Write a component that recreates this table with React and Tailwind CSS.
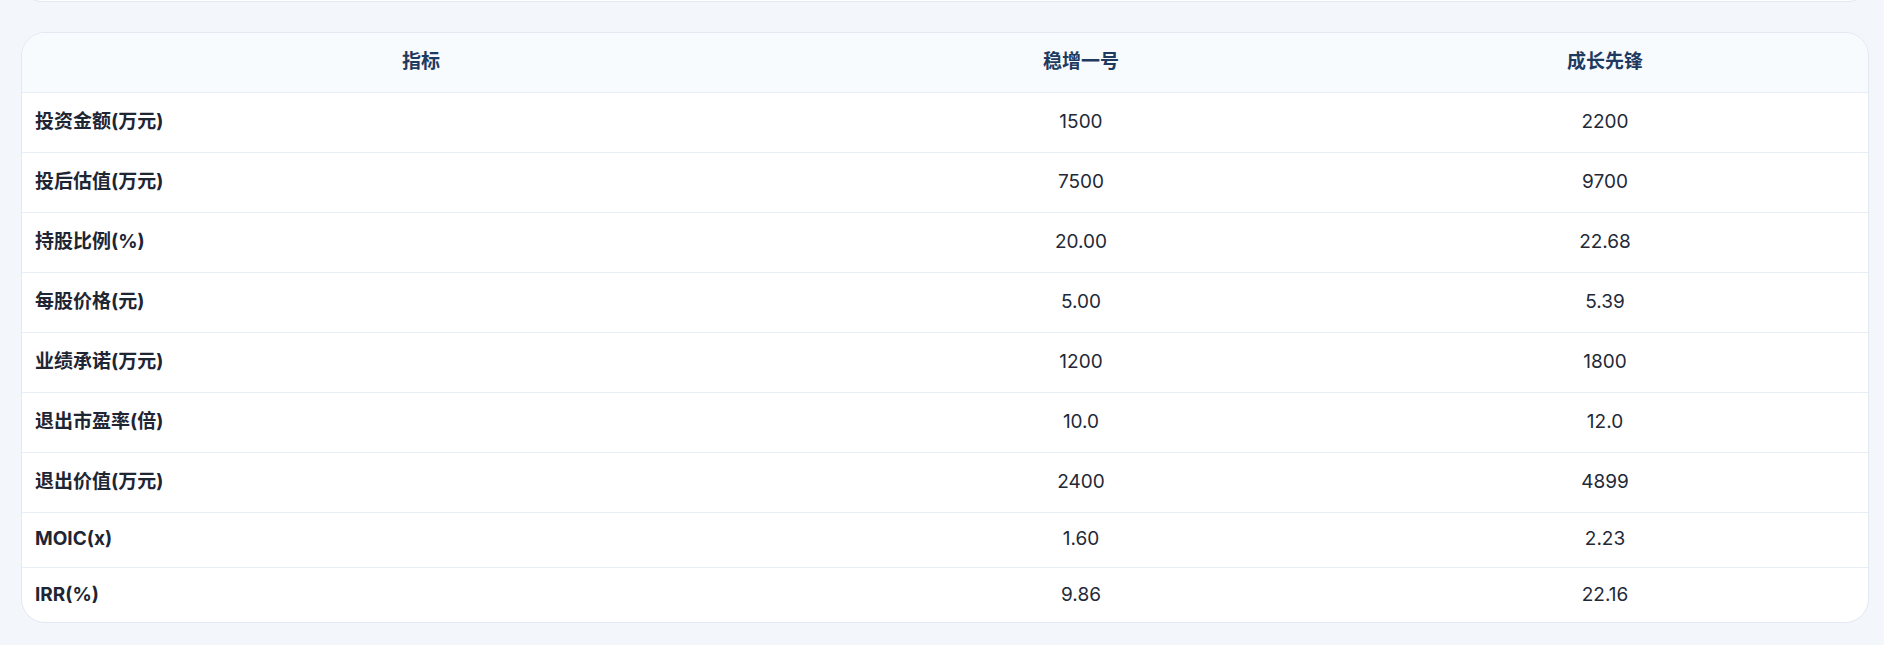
const ROWS = [
  { label: "投资金额(万元)", a: "1500", b: "2200", tall: true },
  { label: "投后估值(万元)", a: "7500", b: "9700", tall: true },
  { label: "持股比例(%)", a: "20.00", b: "22.68", tall: true },
  { label: "每股价格(元)", a: "5.00", b: "5.39", tall: true },
  { label: "业绩承诺(万元)", a: "1200", b: "1800", tall: true },
  { label: "退出市盈率(倍)", a: "10.0", b: "12.0", tall: true },
  { label: "退出价值(万元)", a: "2400", b: "4899", tall: true },
  { label: "MOIC(x)", a: "1.60", b: "2.23", tall: false },
  { label: "IRR(%)", a: "9.86", b: "22.16", tall: false },
];

const FONT = "font-['Inter','Noto_Sans_CJK_SC',sans-serif]";

export default function App() {
  return (
    <div className={`h-[645px] w-[1884px] overflow-hidden bg-[#f3f6fa] ${FONT}`}>
      {/* tail of the previous card, mostly scrolled off */}
      <div className="-mt-[40px] ml-[21px] h-[42px] w-[1848px] rounded-3xl border border-[#e3e9f1] bg-white" />

      <div className="ml-[21px] mt-[30px] w-[1848px] overflow-hidden rounded-3xl border border-[#e3e9f1] bg-white">
        <table className="w-full table-fixed border-collapse">
          <colgroup>
            <col className="w-[798px]" />
            <col className="w-[522px]" />
            <col />
          </colgroup>
          <thead>
            <tr className="h-[59px] border-b border-[#e8eef5] bg-[#f8fbfe] text-[19px] font-bold text-[#1e3a5f]">
              <th className="text-center">指标</th>
              <th className="text-center">稳增一号</th>
              <th className="text-center">成长先锋</th>
            </tr>
          </thead>
          <tbody>
            {ROWS.map((r, i) => (
              <tr
                key={r.label}
                className={`${r.tall ? "h-[60px]" : "h-[55px]"} ${
                  i < ROWS.length - 1 ? "border-b border-[#e8eef5]" : ""
                } text-[19px] text-[#1f2937]`}
              >
                <td className="px-[13px] text-left font-bold text-[#1e2533]">{r.label}</td>
                <td className="text-center">{r.a}</td>
                <td className="text-center">{r.b}</td>
              </tr>
            ))}
          </tbody>
        </table>
      </div>
    </div>
  );
}
